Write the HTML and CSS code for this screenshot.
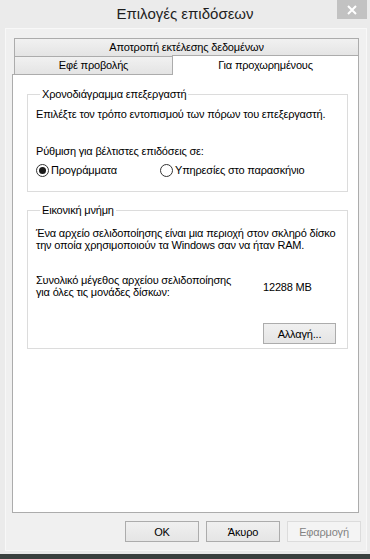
FILE: index.html
```html
<!DOCTYPE html>
<html lang="el">
<head>
  <meta charset="UTF-8">
  <meta name="viewport" content="width=device-width, initial-scale=1.0">
  <title>Επιλογές επιδόσεων</title>
  <link rel="stylesheet" href="styles.css">
</head>
<body>
  <div class="window">
    <div class="titlebar">
      <span class="title">Επιλογές επιδόσεων</span>
      <button class="close-btn" aria-label="Κλείσιμο">
        <svg width="10" height="10" viewBox="0 0 10 10">
          <path d="M1 1 L9 9 M9 1 L1 9" stroke="#ffffff" stroke-width="2" fill="none"/>
        </svg>
      </button>
    </div>

    <div class="client">
      <div class="tabs">
        <div class="tab-row top-row">
          <div class="tab wide">Αποτροπή εκτέλεσης δεδομένων</div>
        </div>
        <div class="tab-row bottom-row">
          <div class="tab">Εφέ προβολής</div>
          <div class="tab active">Για προχωρημένους</div>
        </div>
      </div>

      <div class="panel">
        <fieldset class="group cpu">
          <legend>Χρονοδιάγραμμα επεξεργαστή</legend>
          <p class="line">Επιλέξτε τον τρόπο εντοπισμού των πόρων του επεξεργαστή.</p>
          <p class="line adjust">Ρύθμιση για βέλτιστες επιδόσεις σε:</p>
          <div class="radios">
            <label class="radio first checked"><span class="dot"></span>Προγράμματα</label>
            <label class="radio"><span class="dot"></span>Υπηρεσίες στο παρασκήνιο</label>
          </div>
        </fieldset>

        <fieldset class="group memory">
          <legend>Εικονική μνήμη</legend>
          <p class="line">Ένα αρχείο σελιδοποίησης είναι μια περιοχή στον σκληρό δίσκο<br>την οποία χρησιμοποιούν τα Windows σαν να ήταν RAM.</p>
          <div class="size-row">
            <p class="line">Συνολικό μέγεθος αρχείου σελιδοποίησης<br>για όλες τις μονάδες δίσκων:</p>
            <span class="size-value">12288 MB</span>
          </div>
          <div class="change-row">
            <button class="btn change">Αλλαγή...</button>
          </div>
        </fieldset>
      </div>

      <div class="actions">
        <button class="btn">OK</button>
        <button class="btn">Άκυρο</button>
        <button class="btn" disabled>Εφαρμογή</button>
      </div>
    </div>
  </div>
  <div class="desktop"></div>
</body>
</html>
```

FILE: styles.css
```css
* {
  margin: 0;
  padding: 0;
  box-sizing: border-box;
}

body {
  font-family: 'Liberation Sans', Arial, sans-serif;
  font-size: 11px;
  letter-spacing: -0.18px;
  color: #000000;
  background: #3b4240;
  width: 370px;
  height: 559px;
  overflow: hidden;
}

.window {
  width: 370px;
  height: 554px;
  background: #ebebeb;
  display: flex;
  flex-direction: column;
}

.titlebar {
  height: 28px;
  position: relative;
  display: flex;
  justify-content: center;
  align-items: center;
}

.title {
  font-size: 15px;
  letter-spacing: 0;
  color: #1e1e1e;
  padding-bottom: 2px;
}

.close-btn {
  position: absolute;
  top: 0;
  right: 3px;
  width: 30px;
  height: 19px;
  border: none;
  background: #c2c2c2;
  display: flex;
  align-items: center;
  justify-content: center;
}

.client {
  margin-left: 5px;
  width: 362px;
  height: 523px;
  background: #f0f0f0;
  border: 1px solid #f8f8f8;
  padding: 9px 0 0 6px;
}

/* tabs */
.tabs {
  width: 347px;
}

.tab-row {
  display: flex;
  margin-left: 2px;
}

.top-row {
  height: 19px;
}

.bottom-row {
  height: 18px;
  margin-top: -1px;
}

.tab {
  background: linear-gradient(#f1f1f1, #e4e4e4);
  border: 1px solid #acacac;
  border-bottom: none;
  line-height: 17px;
  text-align: center;
  width: 159px;
  height: 18px;
}

.tab.wide {
  width: 345px;
  height: 19px;
  border-bottom: 1px solid #acacac;
}

.tab.active {
  position: relative;
  z-index: 1;
  background: #ffffff;
  width: 187px;
  height: 20px;
  margin-left: -1px;
  margin-top: -1px;
  line-height: 18px;
}

.panel {
  width: 347px;
  height: 439px;
  background: #ffffff;
  border: 1px solid #acacac;
  padding: 0 10px 0 14px;
}

/* group boxes */
.group {
  border: 1px solid #dcdcdc;
  width: 321px;
  padding: 8px 10px 0 8px;
}

.group legend {
  margin-left: 4px;
  padding: 0 2px;
  line-height: 12px;
}

.line {
  line-height: 12px;
  white-space: nowrap;
}

.cpu {
  margin-top: 13px;
  padding-bottom: 14px;
}

.adjust {
  margin-top: 25px;
}

.radios {
  display: flex;
  margin-top: 6px;
  height: 14px;
  align-items: center;
}

.radio {
  display: flex;
  align-items: center;
  gap: 2px;
}

.radio.first {
  width: 124px;
}

.dot {
  width: 13px;
  height: 13px;
  border: 1px solid #333333;
  border-radius: 50%;
  background: #ffffff;
  display: flex;
  align-items: center;
  justify-content: center;
}

.radio.checked .dot::after {
  content: "";
  width: 7px;
  height: 7px;
  border-radius: 50%;
  background: #1a1a1a;
}

.memory {
  margin-top: 12px;
  padding: 11px 11px 4px 8px;
}

.size-row {
  display: flex;
  align-items: center;
  margin-top: 23px;
}

.size-value {
  margin-left: auto;
  width: 73px;
  padding-top: 1px;
}

.change-row {
  display: flex;
  justify-content: flex-end;
  margin-top: 25px;
}

/* buttons */
.btn {
  font-family: inherit;
  font-size: 11px;
  letter-spacing: inherit;
  color: #000000;
  width: 74px;
  height: 21px;
  border: 1px solid #acacac;
  background: linear-gradient(#f0f0f0, #e5e5e5);
}

.btn.change {
  width: 73px;
}

.btn:disabled {
  color: #838383;
  background: #f4f4f4;
  border-color: #dcdcdc;
}

.actions {
  display: flex;
  justify-content: flex-end;
  gap: 7px;
  margin-top: 8px;
  padding-right: 5px;
}

.desktop {
  height: 5px;
  background: #3b4240;
}
```
